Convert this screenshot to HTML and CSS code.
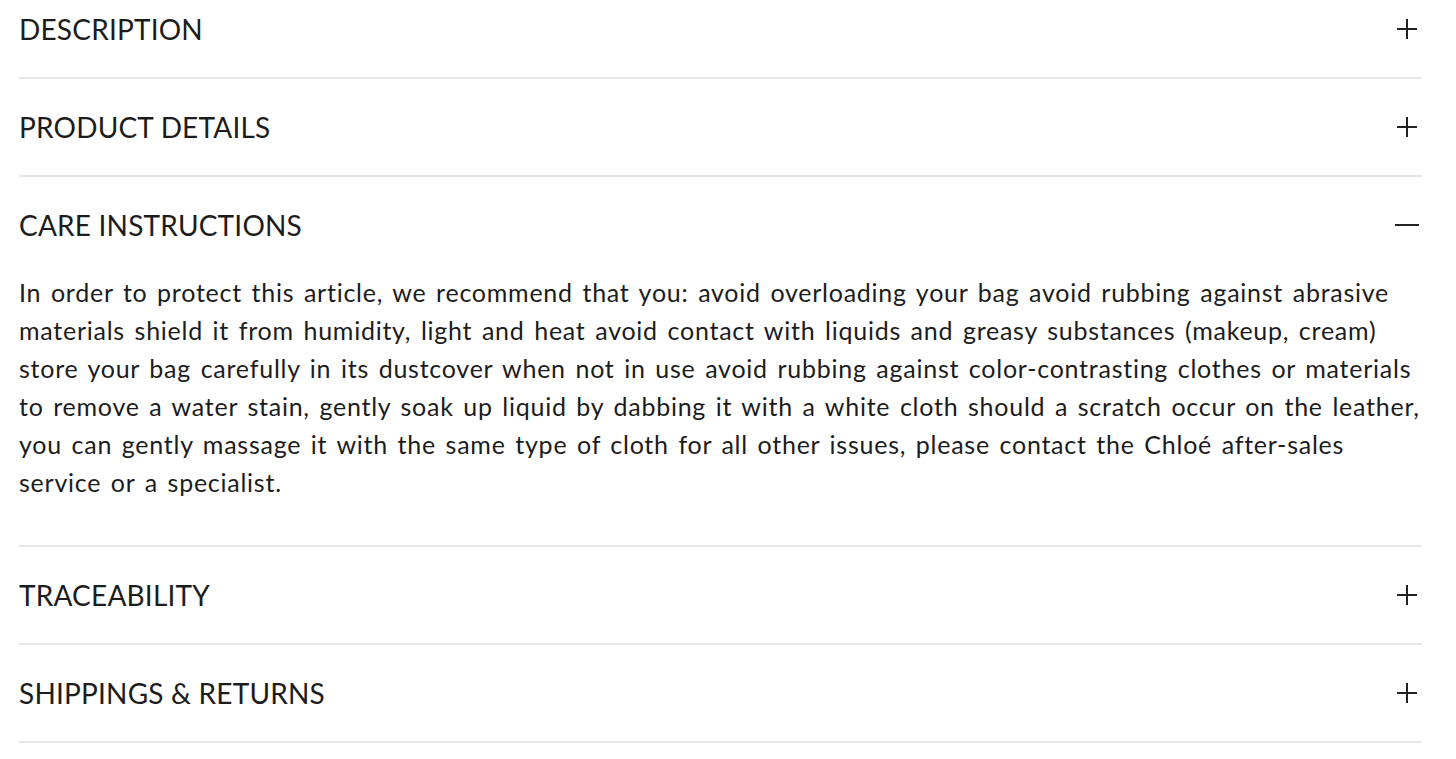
FILE: index.html
```html
<!DOCTYPE html>
<html lang="en">
<head>
<meta charset="utf-8">
<title>Product accordion</title>
<link rel="stylesheet" href="styles.css">
</head>
<body>
<div class="accordion">
  <section class="item">
    <div class="head"><span class="title">DESCRIPTION</span><span class="icon plus"></span></div>
  </section>
  <section class="item">
    <div class="head"><span class="title">PRODUCT DETAILS</span><span class="icon plus"></span></div>
  </section>
  <section class="item open">
    <div class="head"><span class="title">CARE INSTRUCTIONS</span><span class="icon minus"></span></div>
    <p class="body">In order to protect this article, we recommend that you: avoid overloading your bag avoid rubbing against abrasive<br>
materials shield it from humidity, light and heat avoid contact with liquids and greasy substances (makeup, cream)<br>
store your bag carefully in its dustcover when not in use avoid rubbing against color-contrasting clothes or materials<br>
to remove a water stain, gently soak up liquid by dabbing it with a white cloth should a scratch occur on the leather,<br>
you can gently massage it with the same type of cloth for all other issues, please contact the Chloé after-sales<br>
service or a specialist.</p>
  </section>
  <section class="item">
    <div class="head"><span class="title">TRACEABILITY</span><span class="icon plus"></span></div>
  </section>
  <section class="item">
    <div class="head"><span class="title">SHIPPINGS &amp; RETURNS</span><span class="icon plus"></span></div>
  </section>
</div>
</body>
</html>
```
FILE: styles.css
```css
html, body {
  margin: 0;
  padding: 0;
  background: #ffffff;
}
body {
  font-family: Lato, "Noto Sans", sans-serif;
  color: #1c1c1c;
  overflow: hidden;
}
.accordion {
  margin: -19px 34px 0 19px;
}
.item {
  border-bottom: 2px solid #e6e6e6;
}
.head {
  height: 96px;
  display: flex;
  align-items: center;
  justify-content: space-between;
}
.title {
  font-size: 28px;
  letter-spacing: 0.2px;
  font-weight: 400;
}
.icon {
  position: relative;
  width: 20px;
  height: 20px;
  margin-right: 5px;
}
.icon::before,
.icon::after {
  content: "";
  position: absolute;
  background: #222;
}
.plus::before {
  left: 0;
  right: 0;
  top: 9px;
  height: 2px;
}
.plus::after {
  top: 0;
  bottom: 0;
  left: 9px;
  width: 2px;
}
.minus {
  width: 24px;
  margin-right: 3px;
}
.minus::before {
  left: 0;
  right: 0;
  top: 9px;
  height: 2px;
}
.minus::after {
  display: none;
}
.body {
  margin: 0;
  padding: 0 0 44px;
  font-size: 25px;
  line-height: 38px;
  letter-spacing: 0.75px;
  word-spacing: 2.5px;
  white-space: nowrap;
}
```
